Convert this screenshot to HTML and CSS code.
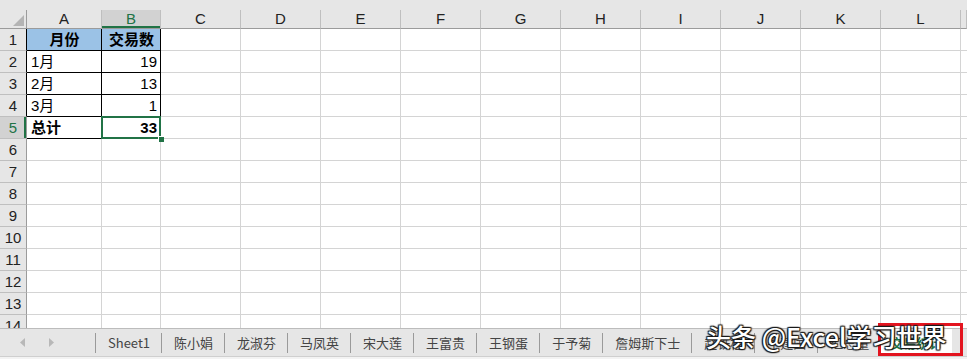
FILE: index.html
```html
<!DOCTYPE html>
<html lang="zh-CN">
<head>
  <meta charset="UTF-8" />
  <meta name="viewport" content="width=device-width, initial-scale=1" />
  <title>交易数统计</title>
  <link rel="stylesheet" href="styles.css">
</head>
<body>
  <div class="topband"></div>

  <div class="sheet">
    <div class="ch corner">
      <svg width="27" height="19" viewBox="0 0 27 19"><polygon points="24,5 24,16 13,16" fill="#b4b4b4"/></svg>
    </div>
    <div class="ch">A</div><div class="ch on">B</div><div class="ch">C</div><div class="ch">D</div><div class="ch">E</div><div class="ch">F</div><div class="ch">G</div><div class="ch">H</div><div class="ch">I</div><div class="ch">J</div><div class="ch">K</div><div class="ch">L</div><div class="ch"></div>

    <div class="rh bl">1</div><div class="c bx hd">月份</div><div class="c bx hd">交易数</div><div class="c"></div><div class="c"></div><div class="c"></div><div class="c"></div><div class="c"></div><div class="c"></div><div class="c"></div><div class="c"></div><div class="c"></div><div class="c"></div><div class="c"></div>
    <div class="rh bl">2</div><div class="c bx">1月</div><div class="c bx num">19</div><div class="c"></div><div class="c"></div><div class="c"></div><div class="c"></div><div class="c"></div><div class="c"></div><div class="c"></div><div class="c"></div><div class="c"></div><div class="c"></div><div class="c"></div>
    <div class="rh bl">3</div><div class="c bx">2月</div><div class="c bx num">13</div><div class="c"></div><div class="c"></div><div class="c"></div><div class="c"></div><div class="c"></div><div class="c"></div><div class="c"></div><div class="c"></div><div class="c"></div><div class="c"></div><div class="c"></div>
    <div class="rh bl">4</div><div class="c bx">3月</div><div class="c bx num">1</div><div class="c"></div><div class="c"></div><div class="c"></div><div class="c"></div><div class="c"></div><div class="c"></div><div class="c"></div><div class="c"></div><div class="c"></div><div class="c"></div><div class="c"></div>
    <div class="rh on">5</div><div class="c bx bold">总计</div><div class="c bx num bold sel">33</div><div class="c"></div><div class="c"></div><div class="c"></div><div class="c"></div><div class="c"></div><div class="c"></div><div class="c"></div><div class="c"></div><div class="c"></div><div class="c"></div><div class="c"></div>
    <div class="rh">6</div><div class="c"></div><div class="c"></div><div class="c"></div><div class="c"></div><div class="c"></div><div class="c"></div><div class="c"></div><div class="c"></div><div class="c"></div><div class="c"></div><div class="c"></div><div class="c"></div><div class="c"></div>
    <div class="rh">7</div><div class="c"></div><div class="c"></div><div class="c"></div><div class="c"></div><div class="c"></div><div class="c"></div><div class="c"></div><div class="c"></div><div class="c"></div><div class="c"></div><div class="c"></div><div class="c"></div><div class="c"></div>
    <div class="rh">8</div><div class="c"></div><div class="c"></div><div class="c"></div><div class="c"></div><div class="c"></div><div class="c"></div><div class="c"></div><div class="c"></div><div class="c"></div><div class="c"></div><div class="c"></div><div class="c"></div><div class="c"></div>
    <div class="rh">9</div><div class="c"></div><div class="c"></div><div class="c"></div><div class="c"></div><div class="c"></div><div class="c"></div><div class="c"></div><div class="c"></div><div class="c"></div><div class="c"></div><div class="c"></div><div class="c"></div><div class="c"></div>
    <div class="rh">10</div><div class="c"></div><div class="c"></div><div class="c"></div><div class="c"></div><div class="c"></div><div class="c"></div><div class="c"></div><div class="c"></div><div class="c"></div><div class="c"></div><div class="c"></div><div class="c"></div><div class="c"></div>
    <div class="rh">11</div><div class="c"></div><div class="c"></div><div class="c"></div><div class="c"></div><div class="c"></div><div class="c"></div><div class="c"></div><div class="c"></div><div class="c"></div><div class="c"></div><div class="c"></div><div class="c"></div><div class="c"></div>
    <div class="rh">12</div><div class="c"></div><div class="c"></div><div class="c"></div><div class="c"></div><div class="c"></div><div class="c"></div><div class="c"></div><div class="c"></div><div class="c"></div><div class="c"></div><div class="c"></div><div class="c"></div><div class="c"></div>
    <div class="rh">13</div><div class="c"></div><div class="c"></div><div class="c"></div><div class="c"></div><div class="c"></div><div class="c"></div><div class="c"></div><div class="c"></div><div class="c"></div><div class="c"></div><div class="c"></div><div class="c"></div><div class="c"></div>
    <div class="rh">14</div><div class="c"></div><div class="c"></div><div class="c"></div><div class="c"></div><div class="c"></div><div class="c"></div><div class="c"></div><div class="c"></div><div class="c"></div><div class="c"></div><div class="c"></div><div class="c"></div><div class="c"></div>
  </div>

  <div class="tabbar">
    <div class="nav">
      <svg width="6" height="9" viewBox="0 0 6 9"><polygon points="5,0 5,9 0,4.5" fill="#b8b8b8"/></svg>
      <svg width="6" height="9" viewBox="0 0 6 9"><polygon points="1,0 1,9 6,4.5" fill="#b8b8b8"/></svg>
    </div>
    <div class="tab">Sheet1</div>
    <div class="tab">陈小娟</div>
    <div class="tab">龙淑芬</div>
    <div class="tab">马凤英</div>
    <div class="tab">宋大莲</div>
    <div class="tab">王富贵</div>
    <div class="tab">王钢蛋</div>
    <div class="tab">于予菊</div>
    <div class="tab">詹姆斯下士</div>
    <div class="tab">赵铁柱</div>
    <div class="tab">牛建国</div>
    <div class="tab">汇总量</div>
    <div class="tab active">交易统计</div>
  </div>
  <div class="statusline"></div>

  <div class="redbox"></div>
  <div class="watermark">头条 @Excel学习世界</div>
</body>
</html>
```

FILE: styles.css
```css
:root {
  --head: #e6e6e6;
  --head-on: #d2d2d2;
  --grid: #d4d4d4;
  --green: #217346;
  --blue: #9bc2e6;
}
body {
  margin: 0;
  width: 967px;
  height: 359px;
  overflow: hidden;
  position: relative;
  background: #fff;
  font-family: "Liberation Sans", "Noto Sans CJK SC", sans-serif;
  color: #000;
}
.topband {
  height: 10px;
  background: var(--head);
}
.sheet {
  display: grid;
  grid-template-columns: 27px 75px 59px repeat(10, 80px) 6px;
  grid-template-rows: 19px repeat(14, 22px);
  height: 318px;
  overflow: hidden;
  font-size: 15px;
}
.sheet > div {
  box-sizing: border-box;
  white-space: nowrap;
  overflow: hidden;
}
.ch {
  background: var(--head);
  border-right: 1px solid #bfbfbf;
  border-bottom: 1px solid #9b9b9b;
  text-align: center;
  line-height: 18px;
  color: #222;
}
.ch.corner {
  border-right-color: #9b9b9b;
}
.ch.on {
  background: var(--head-on);
  color: var(--green);
  box-shadow: inset 0 -2px 0 var(--green);
}
.rh {
  background: var(--head);
  border-right: 1px solid #9b9b9b;
  border-bottom: 1px solid #bfbfbf;
  text-align: center;
  line-height: 21px;
  color: #222;
}
.rh.bl {
  border-right-color: #000;
}
.rh.on {
  background: var(--head-on);
  color: var(--green);
  box-shadow: inset -2px 0 0 var(--green);
}
.c {
  border-right: 1px solid var(--grid);
  border-bottom: 1px solid var(--grid);
  line-height: 21px;
  padding: 0 3px 0 4px;
}
.c.bx {
  border-right-color: #000;
  border-bottom-color: #000;
}
.c.hd {
  background: var(--blue);
  font-weight: bold;
  text-align: center;
}
.num {
  text-align: right;
}
.bold {
  font-weight: bold;
}
.sheet > .sel {
  position: relative;
  overflow: visible;
  z-index: 1;
}
.sel::before {
  content: '';
  position: absolute;
  left: -1px;
  top: -1px;
  right: -1px;
  bottom: -1px;
  border: 2px solid var(--green);
}
.sel::after {
  content: '';
  position: absolute;
  right: -4px;
  bottom: -4px;
  width: 5px;
  height: 5px;
  background: var(--green);
  border: 1px solid #fff;
  border-right: 0;
  border-bottom: 0;
}
.tabbar {
  display: flex;
  height: 27px;
  overflow: hidden;
  background: var(--head);
  border-top: 1px solid #bcbcbc;
  border-bottom: 1px solid #cfcfcf;
  font-size: 13px;
  color: #444;
}
.nav {
  flex: 0 0 95px;
  display: flex;
  align-items: center;
  gap: 22px;
  padding-left: 20px;
  box-sizing: border-box;
}
.tab {
  flex: 0 0 auto;
  white-space: nowrap;
  margin: 4px 0 3px;
  padding: 0 11px 0 12px;
  line-height: 20px;
  border-left: 1px solid #9a9a9a;
  font-family: "Noto Sans CJK SC", "Liberation Sans", sans-serif;
}
.tab:first-of-type {
  padding: 0 13px 0 12px;
  font-family: "Liberation Sans", sans-serif;
}
.tab.active {
  margin: 0;
  padding: 0 10px;
  line-height: 27px;
  background: #fff;
  color: var(--green);
  font-weight: bold;
  border-left: 0;
}
.statusline {
  height: 3px;
  background: #f3f3f3;
}
.redbox {
  position: absolute;
  left: 878px;
  top: 323px;
  width: 79px;
  height: 27px;
  border: 3px solid #e3141f;
}
.watermark {
  position: absolute;
  left: 706px;
  top: 319px;
  font-family: "Noto Sans CJK SC", "Liberation Sans", sans-serif;
  font-size: 25px;
  font-weight: 500;
  line-height: 34px;
  color: #fff;
  white-space: nowrap;
  text-shadow: 0 0 2px #000, 1px 1px 1px #222, -1px -1px 1px #222, 1px -1px 1px #222, -1px 1px 1px #222;
}
```
